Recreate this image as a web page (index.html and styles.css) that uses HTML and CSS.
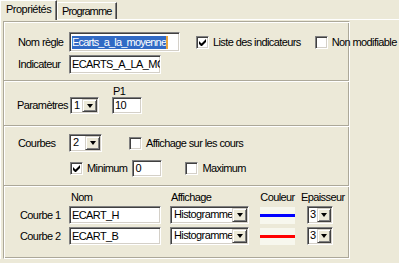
FILE: index.html
```html
<!DOCTYPE html>
<html lang="fr">
<head>
    <meta charset="UTF-8">
    <title>Propriétés de la règle</title>
    <link rel="stylesheet" href="styles.css">
</head>
<body>
    <!-- onglets -->
    <div class="tabs">
        <div class="tab active">Propriétés</div>
        <div class="tab">Programme</div>
    </div>

    <div class="panel">
        <div class="frame">

            <!-- nom de la règle -->
            <div class="section s-rule">
                <div class="row">
                    <span class="lbl">Nom règle</span>
                    <div class="field w-name"><span class="hl">Ecarts_a_la_moyenne</span><span class="caret"></span></div>
                    <div class="check first">
                        <span class="box"><svg width="7" height="7" viewBox="0 0 7 7"><path d="M0 2L2.5 4.5L7 0V3L3 7H2L0 5Z"/></svg></span>
                        Liste des indicateurs
                    </div>
                    <div class="check next">
                        <span class="box"></span>
                        Non modifiable
                    </div>
                </div>
                <div class="row row-2">
                    <span class="lbl">Indicateur</span>
                    <div class="field w-ind">ECARTS_A_LA_MOYENNE</div>
                </div>
            </div>

            <!-- paramètres -->
            <div class="section s-params">
                <div class="row bottom">
                    <span class="lbl lbl-param">Paramètres</span>
                    <div class="combo w-nb">
                        <span class="val">1</span>
                        <span class="drop"><i></i></span>
                    </div>
                    <div class="param">
                        <span class="param-name">P1</span>
                        <div class="field w-p">10</div>
                    </div>
                </div>
            </div>

            <!-- courbes -->
            <div class="section s-curves">
                <div class="row">
                    <span class="lbl">Courbes</span>
                    <div class="combo w-curves">
                        <span class="val">2</span>
                        <span class="drop"><i></i></span>
                    </div>
                    <div class="check on-price">
                        <span class="box"></span>
                        Affichage sur les cours
                    </div>
                </div>
                <div class="row row-minmax">
                    <div class="check">
                        <span class="box"><svg width="7" height="7" viewBox="0 0 7 7"><path d="M0 2L2.5 4.5L7 0V3L3 7H2L0 5Z"/></svg></span>
                        Minimum
                    </div>
                    <div class="field w-min">0</div>
                    <div class="check max">
                        <span class="box"></span>
                        Maximum
                    </div>
                </div>
            </div>

            <!-- tableau des courbes -->
            <div class="section s-table">
                <div class="grid">
                    <span></span>
                    <span class="head h-nom">Nom</span>
                    <span class="head h-aff">Affichage</span>
                    <span class="head h-col">Couleur</span>
                    <span class="head h-ep">Epaisseur</span>

                    <span class="lbl-row">Courbe 1</span>
                    <div class="field w-curve">ECART_H</div>
                    <div class="combo w-aff">
                        <span class="val">Histogramme</span>
                        <span class="drop"><i></i></span>
                    </div>
                    <div class="swatch"><span class="line blue"></span></div>
                    <div class="combo w-ep">
                        <span class="val">3</span>
                        <span class="drop"><i></i></span>
                    </div>

                    <span class="lbl-row">Courbe 2</span>
                    <div class="field w-curve">ECART_B</div>
                    <div class="combo w-aff">
                        <span class="val">Histogramme</span>
                        <span class="drop"><i></i></span>
                    </div>
                    <div class="swatch"><span class="line red"></span></div>
                    <div class="combo w-ep">
                        <span class="val">3</span>
                        <span class="drop"><i></i></span>
                    </div>
                </div>
            </div>

        </div>
    </div>
</body>
</html>
```

FILE: styles.css
```css
/* base */
* {
    margin: 0;
    padding: 0;
    box-sizing: border-box;
}

body {
    width: 399px;
    height: 263px;
    overflow: hidden;
    background: #ece9d8;
    color: #000;
    font-family: "Liberation Sans", Arial, sans-serif;
    font-size: 11px;
    line-height: 13px;
    letter-spacing: -0.6px;
}

/* onglets */
.tabs {
    display: flex;
    align-items: flex-end;
    height: 19px;
}

.tab {
    height: 17px;
    padding: 2px 0 0 4px;
    border-top: 1px solid #fff;
    border-left: 1px solid #fff;
    border-right: 1px solid #404040;
    box-shadow: inset -1px 0 #808080;
    letter-spacing: -0.9px;
}

.tab.active {
    position: relative;
    width: 57px;
    height: 20px;
    margin-bottom: -1px;
    padding: 2px 0 0 5px;
    background: #ece9d8;
    letter-spacing: -0.5px;
}

.tab + .tab {
    width: 60px;
}

/* cadre principal */
.panel {
    border-top: 1px solid #fff;
    border-left: 1px solid #fff;
    padding: 1px 0 0 2px;
}

.frame {
    width: 347px;
    height: 238px;
    display: flex;
    flex-direction: column;
    border: 1px solid;
    border-color: #aca899 #fff #fff #aca899;
    box-shadow: inset 1px 1px #fff, inset -1px -1px #aca899;
}

.section + .section {
    border-top: 1px solid #aca899;
    box-shadow: inset 0 1px #fff;
}

.s-rule {
    height: 58px;
    padding: 10px 0 0 14px;
}

.s-params {
    height: 45px;
    padding: 4px 0 0 13px;
}

.s-curves {
    height: 60px;
    padding: 8px 0 0 14px;
}

.s-table {
    flex: 1;
    padding: 5px 0 0 16px;
}

.row {
    display: flex;
    align-items: center;
}

.row.bottom {
    align-items: flex-end;
}

.row-2 {
    margin-top: 3px;
}

.lbl {
    width: 51px;
    flex-shrink: 0;
}

.lbl-param {
    width: 53px;
    line-height: 17px;
}

/* champs de saisie */
.field {
    display: flex;
    align-items: center;
    height: 17px;
    padding-left: 2px;
    background: #fff;
    border: 1px solid;
    border-color: #808080 #fff #fff #808080;
    box-shadow: inset 1px 1px #404040, inset -1px -1px #d4d0c8;
    white-space: nowrap;
    overflow: hidden;
    flex-shrink: 0;
}

.w-name { width: 111px; height: 20px; }
.w-ind { width: 92px; height: 19px; }
.w-p { width: 30px; }
.w-min { width: 30px; margin-left: 5px; }
.w-curve { width: 92px; height: 18px; }

.hl {
    background: #316ac5;
    color: #fff;
    line-height: 13px;
    letter-spacing: -0.8px;
}

.caret {
    width: 2px;
    height: 13px;
    background: #e8a33d;
}

/* listes déroulantes */
.combo {
    display: flex;
    height: 17px;
    background: #fff;
    border: 1px solid;
    border-color: #808080 #fff #fff #808080;
    box-shadow: inset 1px 1px #404040, inset -1px -1px #d4d0c8;
    padding: 1px;
    flex-shrink: 0;
}

.combo .val {
    flex: 1;
    padding-left: 2px;
    line-height: 13px;
    white-space: nowrap;
    overflow: hidden;
}

.drop {
    width: 15px;
    display: flex;
    align-items: center;
    justify-content: center;
    background: #ece9d8;
    border: 1px solid;
    border-color: #d4d0c8 #404040 #404040 #d4d0c8;
    box-shadow: inset 1px 1px #fff, inset -1px -1px #808080;
}

.drop i {
    width: 0;
    height: 0;
    border-style: solid;
    border-width: 4px 3.5px 0;
    border-color: #000 transparent transparent;
}

.w-nb { width: 29px; }
.w-curves { width: 33px; height: 18px; }
.w-aff { width: 79px; height: 18px; }
.w-ep { width: 26px; height: 18px; }
.w-ep .val { padding-left: 1px; }
.w-ep .drop { width: 14px; }

/* cases à cocher */
.check {
    display: flex;
    align-items: center;
    gap: 4px;
    white-space: nowrap;
}

.check.first { margin-left: 16px; }
.check.next { margin-left: 14px; }
.check.on-price { margin-left: 27px; }
.check.max { margin-left: 23px; }

.box {
    width: 13px;
    height: 13px;
    display: flex;
    align-items: center;
    justify-content: center;
    background: #fff;
    border: 1px solid;
    border-color: #808080 #fff #fff #808080;
    box-shadow: inset 1px 1px #404040, inset -1px -1px #d4d0c8;
}

.box svg {
    fill: #000;
}

/* paramètre P1 */
.param {
    display: flex;
    flex-direction: column;
    margin-left: 13px;
}

.param-name {
    line-height: 12px;
    padding-left: 1px;
}

.row-minmax {
    margin-top: 8px;
    padding-left: 52px;
}

/* tableau des courbes */
.grid {
    display: grid;
    grid-template-columns: 49px 101px 90px 47px 26px;
    grid-template-rows: 12px 18px 18px;
    row-gap: 3px;
    align-items: center;
}

.head {
    line-height: 12px;
    white-space: nowrap;
}

.h-nom { padding-left: 2px; }
.h-aff { padding-left: 1px; }
.h-col { width: 35px; text-align: center; }
.h-ep { margin-left: -6px; }

.swatch {
    width: 35px;
    height: 17px;
    display: flex;
    align-items: center;
    background: #f7f7ee;
}

.line {
    width: 100%;
    height: 3px;
}

.line.blue { background: #0000ff; }
.line.red { background: #ff0000; }
```
